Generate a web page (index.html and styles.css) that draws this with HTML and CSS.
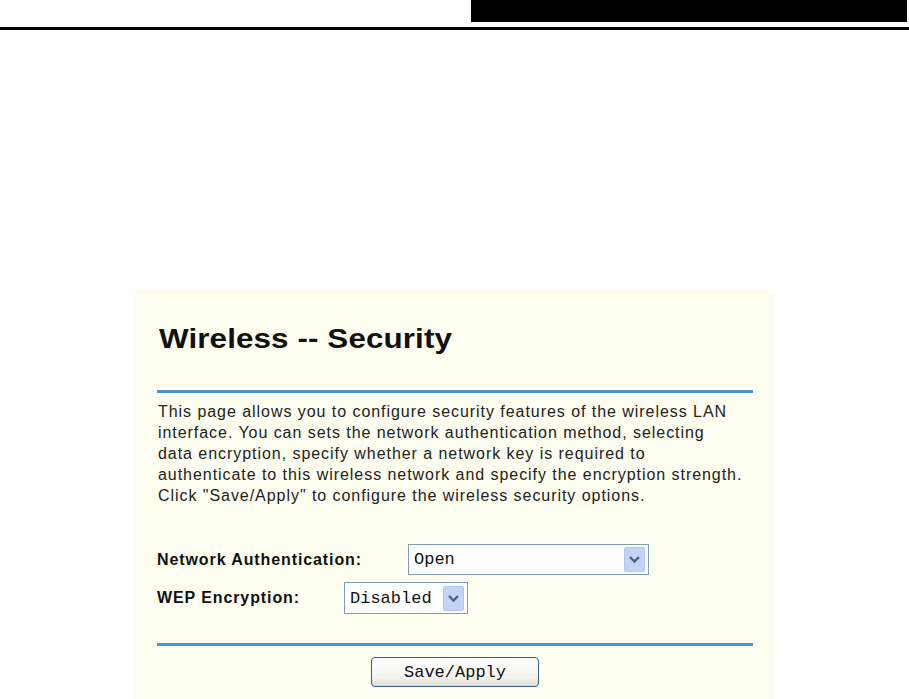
FILE: index.html
```html
<!DOCTYPE html>
<html>
<head>
	<meta charset="utf-8">
	<title>Wireless -- Security</title>
	<link rel="stylesheet" href="styles.css">
</head>
<body>
	<header class="cabecera">
		<div class="hueco"></div>
		<div class="caja-negra"></div>
	</header>
	<div class="raya"></div>

	<section class="panel">
		<h1 class="titulo">Wireless -- Security</h1>
		<div class="linea-azul"></div>
		<p class="texto">This page allows you to configure security features of the wireless LAN<br>
			interface. You can sets the network authentication method, selecting<br>
			data encryption, specify whether a network key is required to<br>
			authenticate to this wireless network and specify the encryption strength.<br>
			Click "Save/Apply" to configure the wireless security options.</p>

		<div class="fila fila-auth">
			<span class="etiqueta">Network Authentication:</span>
			<div class="combo combo-auth">
				<span class="valor">Open</span>
				<span class="flecha">
					<svg width="13" height="9" viewBox="0 0 13 9"><path d="M2 2 L6.5 6.5 L11 2" fill="none" stroke="#4d6185" stroke-width="2.4"/></svg>
				</span>
			</div>
		</div>
		<div class="fila fila-wep">
			<span class="etiqueta">WEP Encryption:</span>
			<div class="combo combo-wep">
				<span class="valor">Disabled</span>
				<span class="flecha">
					<svg width="13" height="9" viewBox="0 0 13 9"><path d="M2 2 L6.5 6.5 L11 2" fill="none" stroke="#4d6185" stroke-width="2.4"/></svg>
				</span>
			</div>
		</div>

		<div class="linea-azul linea-baja"></div>
		<div class="botonera">
			<button class="boton">Save/Apply</button>
		</div>
	</section>
</body>
</html>
```

FILE: styles.css
```css
body {
	margin: 0;
	background-color: white;
	font-family: "Liberation Sans", Arial, sans-serif;
	overflow: hidden;
}
.cabecera {
	display: flex;
	height: 22px;
}
.hueco {
	flex: 1;
}
.caja-negra {
	width: 436px;
	margin-right: 2px;
	background-color: black;
}
.raya {
	margin-top: 5px;
	height: 3px;
	background-color: black;
}
.panel {
	margin: 260px 0 0 135px;
	width: 618px;
	height: 420px;
	padding: 0 0 0 22px;
	background-color: #fdfdf0;
}
.titulo {
	margin: 0 0 0 2px;
	padding-top: 33px;
	font-size: 28px;
	line-height: 32px;
	font-weight: bold;
	color: #111;
	letter-spacing: 0.1px;
	transform: scaleX(1.12);
	transform-origin: left;
}
.linea-azul {
	width: 596px;
	height: 3px;
	margin-top: 35px;
	background-color: #4b95cb;
}
.linea-baja {
	margin-top: 29px;
}
.texto {
	margin: 8px 0 0 1px;
	font-size: 16px;
	line-height: 21px;
	color: #222;
	letter-spacing: 0.95px;
	white-space: nowrap;
}
.fila {
	display: flex;
	align-items: center;
}
.fila-auth {
	margin-top: 38px;
}
.fila-wep {
	margin-top: 7px;
}
.etiqueta {
	font-size: 16px;
	font-weight: bold;
	color: #111;
	letter-spacing: 0.9px;
}
.fila-auth .etiqueta {
	width: 251px;
}
.fila-wep .etiqueta {
	width: 187px;
}
.combo {
	display: flex;
	align-items: center;
	justify-content: space-between;
	height: 31px;
	border: 1px solid #7f9db9;
	background-color: white;
	box-sizing: border-box;
	padding: 0 3px 0 5px;
}
.combo-auth {
	width: 241px;
}
.combo-wep {
	width: 124px;
	height: 32px;
}
.valor {
	font-family: "Liberation Mono", "Courier New", monospace;
	font-size: 17px;
	color: #111;
}
.flecha {
	display: flex;
	align-items: center;
	justify-content: center;
	width: 21px;
	height: 25px;
	border-radius: 2px;
	background-color: #c4d4f8;
	border: 1px solid #b4c6ee;
	box-sizing: border-box;
}
.botonera {
	display: flex;
	justify-content: center;
	width: 596px;
	margin-top: 11px;
}
.boton {
	width: 168px;
	height: 30px;
	padding-top: 2px;
	border: 1px solid #3c5a8a;
	border-radius: 4px;
	background: linear-gradient(#ffffff, #f4f4ee 70%, #dcdcd2);
	font-family: "Liberation Mono", "Courier New", monospace;
	font-size: 17px;
	color: #111;
}
```
